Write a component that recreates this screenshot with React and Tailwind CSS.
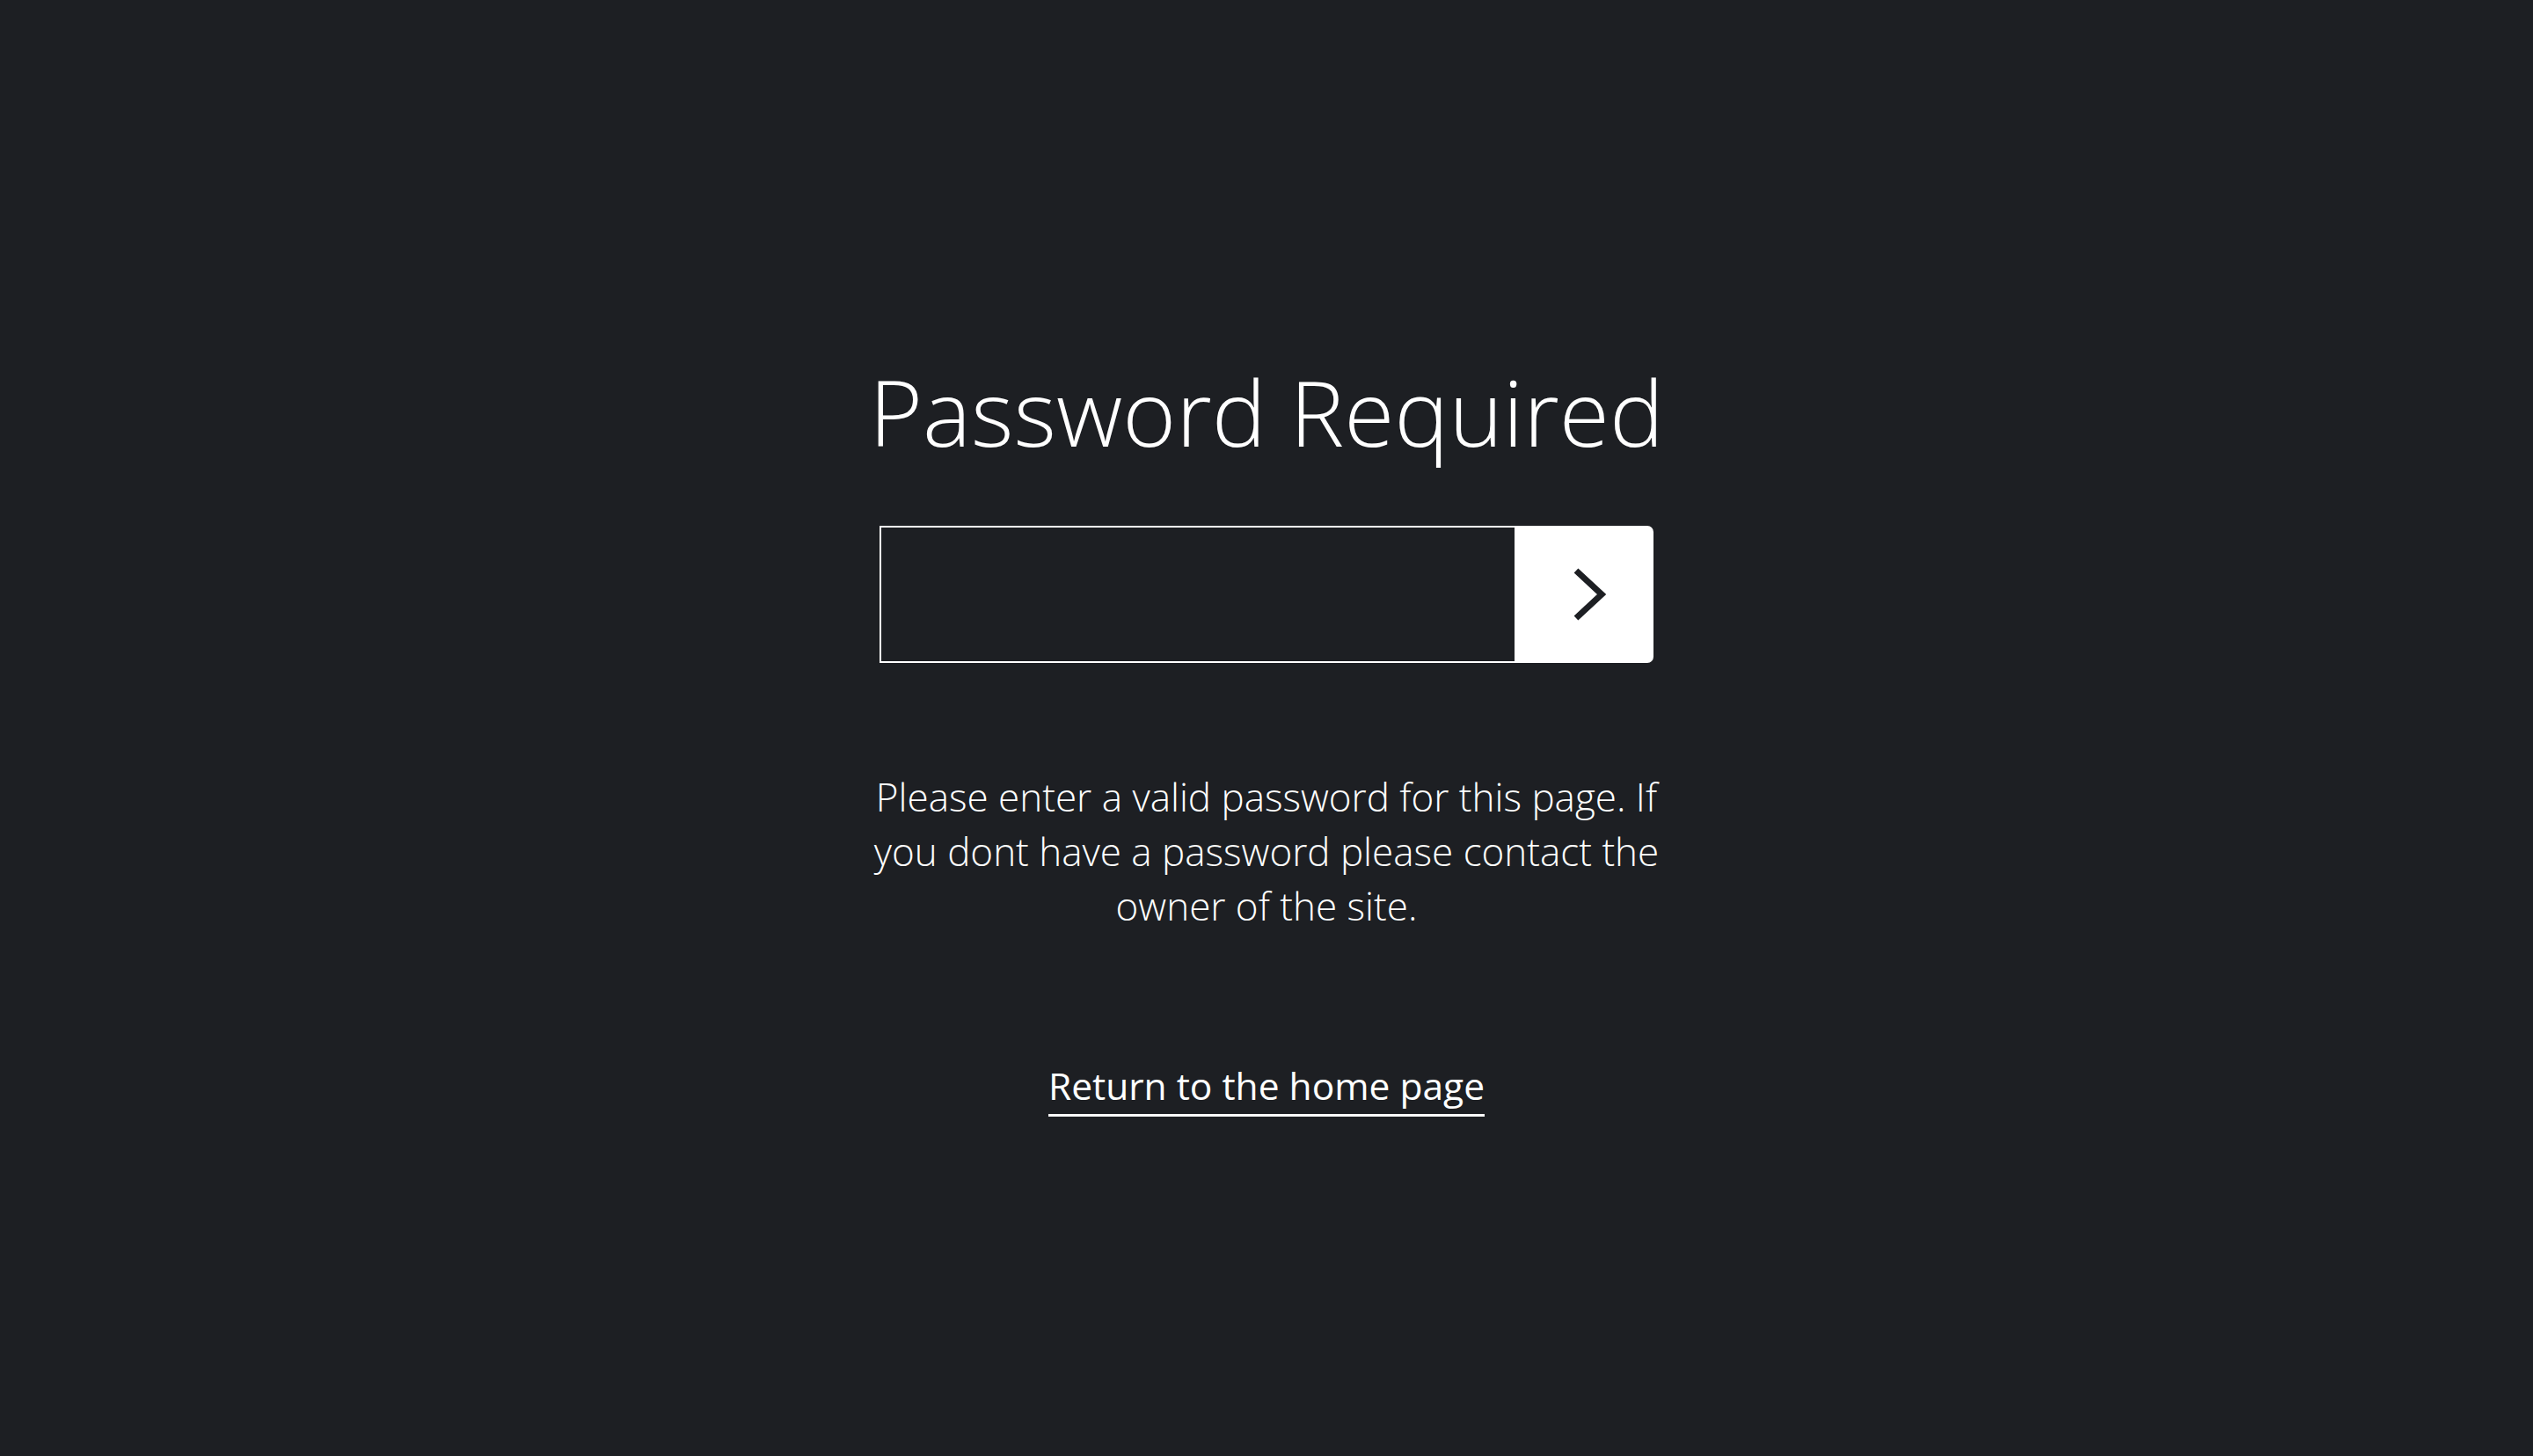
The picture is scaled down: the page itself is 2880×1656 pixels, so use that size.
const App = () => {
  return (
    <div className="min-h-screen w-full bg-[#1d1f23] flex flex-col items-center pt-[406px] text-white font-['Open_Sans',sans-serif]">
      <h1 className="text-[104px] font-light leading-[1.2] tracking-normal">
        Password Required
      </h1>

      <form className="mt-[67px] flex h-[156px] w-[880px]">
        <input
          type="password"
          className="h-full flex-1 border-2 border-white bg-transparent px-6 text-4xl text-white outline-none"
        />
        <button
          type="button"
          className="flex h-full w-[156px] items-center justify-center rounded-r-[7px] bg-white pl-[10px] text-[#1d1f23]"
        >
          <svg width="38" height="60" viewBox="0 0 38 60" fill="none">
            <path d="M4 3 L33 30 L4 57" stroke="currentColor" strokeWidth="7" strokeLinecap="butt" strokeLinejoin="miter" />
          </svg>
        </button>
      </form>

      <p className="mt-[121px] w-[900px] text-center text-[44px] font-light leading-[62px]">
        Please enter a valid password for this page. If you dont have a password please contact the owner of the site.
      </p>

      <a
        href="#"
        className="mt-[148px] inline-block border-b-[3px] border-white pb-[7px] text-[42.5px] leading-[1.2]"
      >
        Return to the home page
      </a>
    </div>
  );
};

export default App;
